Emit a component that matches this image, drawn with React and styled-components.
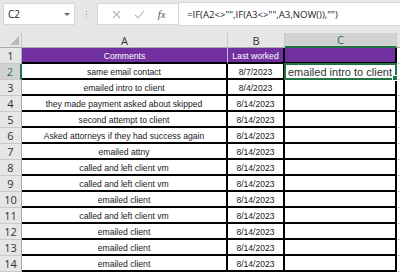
import React from "react";
import styled, { createGlobalStyle } from "styled-components";

const rows = [
  { a: "Comments", b: "Last worked", header: true },
  { a: "same email contact", b: "8/7/2023", c: "emailed intro to client" },
  { a: "emailed intro to client", b: "8/4/2023" },
  { a: "they made payment asked about skipped", b: "8/14/2023" },
  { a: "second attempt to client", b: "8/14/2023" },
  { a: "Asked attorneys if they had success again", b: "8/14/2023" },
  { a: "emailed attny", b: "8/14/2023" },
  { a: "called and left client vm", b: "8/14/2023" },
  { a: "called and left client vm", b: "8/14/2023" },
  { a: "emailed client", b: "8/14/2023" },
  { a: "called and left client vm", b: "8/14/2023" },
  { a: "emailed client", b: "8/14/2023" },
  { a: "emailed client", b: "8/14/2023" },
  { a: "emailed client", b: "8/14/2023" },
];

const App = () => {
  return (
    <>
      <GlobalStyle />
      <Toolbar>
        <NameBox>
          <span>C2</span>
          <Caret />
        </NameBox>
        <Dots>
          <i />
          <i />
          <i />
        </Dots>
        <FxBox>
          <svg width="9" height="9" viewBox="0 0 9 9">
            <path d="M1 1L8 8M8 1L1 8" stroke="#b3b3b3" strokeWidth="1.1" />
          </svg>
          <svg width="11" height="9" viewBox="0 0 11 9">
            <path d="M1 5L4 8L10 1" stroke="#b3b3b3" strokeWidth="1.1" fill="none" />
          </svg>
          <Fx>fx</Fx>
        </FxBox>
        <Formula>{'=IF(A2<>"",IF(A3<>"",A3,NOW()),"")'}</Formula>
      </Toolbar>
      <Sheet>
        <Corner>
          <svg width="9" height="9" viewBox="0 0 9 9">
            <path d="M9 0L9 9L0 9Z" fill="#b9b9b9" />
          </svg>
        </Corner>
        <ColHead>A</ColHead>
        <ColHead>B</ColHead>
        <ColHead $active>C</ColHead>
        <ColHead $last />
        {rows.map((r, i) => (
          <React.Fragment key={i}>
            <RowHead $active={i === 1}>{i + 1}</RowHead>
            <Cell $header={r.header} $col="a">{r.a}</Cell>
            <Cell $header={r.header} $col="b">{r.b}</Cell>
            {i === 1 ? (
              <Selected>
                {r.c}
                <Handle />
              </Selected>
            ) : (
              <Cell $header={r.header} $col="c" />
            )}
            <Spare />
          </React.Fragment>
        ))}
      </Sheet>
    </>
  );
};

const GlobalStyle = createGlobalStyle`
  body {
    margin: 0;
    background: #ffffff;
    overflow: hidden;
    font-family: "Liberation Sans", Arial, sans-serif;
  }
`;

const Toolbar = styled.div`
  display: flex;
  align-items: center;
  height: 33px;
  padding: 0 0 5px 3px;
  box-sizing: border-box;
  background: #e6e6e6;
`;

const NameBox = styled.div`
  display: flex;
  align-items: center;
  justify-content: space-between;
  width: 72px;
  height: 22px;
  padding: 0 4px 0 4px;
  box-sizing: border-box;
  background: #ffffff;
  border: 1px solid #d6d6d6;
  font-family: "Open Sans", sans-serif;
  font-size: 10px;
  color: #222;
`;

const Caret = styled.span`
  width: 0;
  height: 0;
  border-left: 3px solid transparent;
  border-right: 3px solid transparent;
  border-top: 3px solid #666;
`;

const Dots = styled.div`
  display: flex;
  flex-direction: column;
  gap: 2px;
  width: 22px;
  align-items: center;
  i {
    width: 1px;
    height: 1px;
    background: #9a9a9a;
  }
`;

const FxBox = styled.div`
  display: flex;
  align-items: center;
  justify-content: space-around;
  width: 81px;
  height: 22px;
  padding: 0 6px 0 8px;
  box-sizing: border-box;
  background: #ffffff;
  border: 1px solid #d6d6d6;
  border-right: none;
`;

const Fx = styled.span`
  font-family: "Liberation Serif", serif;
  font-style: italic;
  font-size: 11px;
  color: #555;
`;

const Formula = styled.div`
  flex: 1;
  height: 22px;
  display: flex;
  align-items: center;
  padding-left: 8px;
  background: #ffffff;
  border: 1px solid #d6d6d6;
  border-right: none;
  font-family: "Open Sans", sans-serif;
  font-size: 9.6px;
  color: #222;
  white-space: nowrap;
`;

const Sheet = styled.div`
  display: grid;
  grid-template-columns: 22px 206px 57px 112px 1fr;
  grid-template-rows: 15px;
  grid-auto-rows: 16px;
`;

const Corner = styled.div`
  display: flex;
  align-items: flex-end;
  justify-content: flex-end;
  padding: 0 2px 2px 0;
  background: #e6e6e6;
  border-right: 1px solid #c8c8c8;
  border-bottom: 1px solid #ababab;
`;

const ColHead = styled.div`
  display: flex;
  align-items: center;
  justify-content: center;
  box-sizing: border-box;
  background: ${(p) => (p.$active ? "#d2d2d2" : "#e6e6e6")};
  color: ${(p) => (p.$active ? "#217346" : "#333")};
  border-right: ${(p) => (p.$last ? "none" : "1px solid #c8c8c8")};
  border-bottom: ${(p) => (p.$active ? "2px solid #217346" : "1px solid #ababab")};
  font-family: "Open Sans", sans-serif;
  font-size: 11px;
`;

const RowHead = styled.div`
  display: flex;
  align-items: center;
  justify-content: center;
  box-sizing: border-box;
  background: ${(p) => (p.$active ? "#d2d2d2" : "#e6e6e6")};
  color: ${(p) => (p.$active ? "#217346" : "#333")};
  border-bottom: 1px solid #c8c8c8;
  border-right: ${(p) => (p.$active ? "2px solid #217346" : "1px solid #ababab")};
  font-family: "Open Sans", sans-serif;
  font-size: 11px;
`;

const Cell = styled.div`
  display: flex;
  align-items: center;
  justify-content: center;
  box-sizing: border-box;
  padding-top: 1px;
  overflow: hidden;
  white-space: nowrap;
  background: ${(p) => (p.$header ? "#7030a0" : "#ffffff")};
  color: ${(p) => (p.$header ? "#ffffff" : "#1a1a1a")};
  border-bottom: 2px solid #000;
  border-right: ${(p) => (p.$col === "a" && p.$header ? "1px solid #c9b3dc" : "2px solid #000")};
  font-size: 8.6px;
`;

const Selected = styled.div`
  position: relative;
  display: flex;
  align-items: center;
  box-sizing: border-box;
  padding-left: 2px;
  margin: -1px 0 0 -1px;
  white-space: nowrap;
  background: #ffffff;
  border: 2px solid #217346;
  font-size: 11px;
  color: #333;
`;

const Handle = styled.span`
  position: absolute;
  right: -3px;
  bottom: -3px;
  width: 4px;
  height: 4px;
  background: #217346;
  border: 1px solid #ffffff;
`;

const Spare = styled.div`
  box-sizing: border-box;
  border-bottom: 1px solid #d4d4d4;
`;

export default App;
